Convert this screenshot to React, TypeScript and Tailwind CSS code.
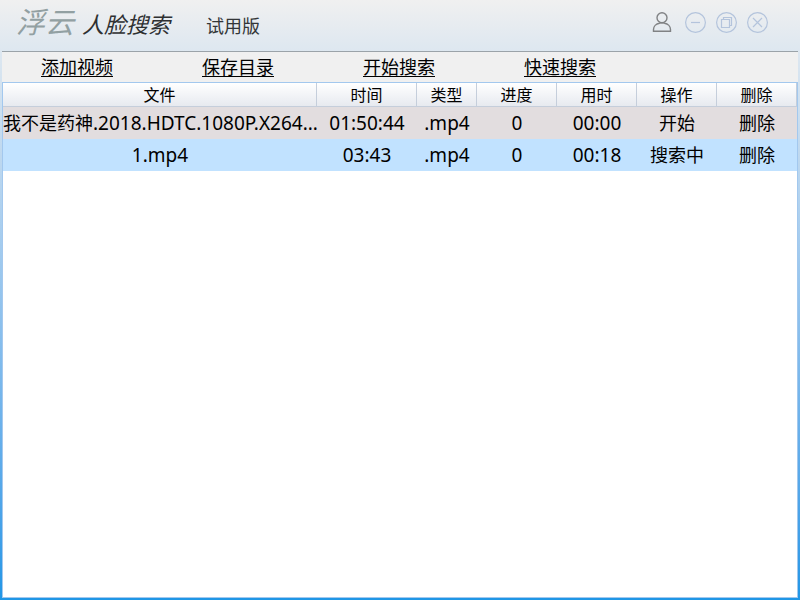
import type { ReactNode } from "react";

type Video = {
  title: string;
  file: string;
  duration: string;
  type: string;
  progress: number;
  elapsed: string;
  action: string;
  rowClass: string;
};

const menu = ["添加视频", "保存目录", "开始搜索", "快速搜索"];

const columns = [
  { title: "文件", width: "" },
  { title: "时间", width: "w-[100px]" },
  { title: "类型", width: "w-[60px]" },
  { title: "进度", width: "w-[80px]" },
  { title: "用时", width: "w-[80px]" },
  { title: "操作", width: "w-[80px]" },
  { title: "删除", width: "w-[80px]" },
];

const videos: Video[] = [
  {
    title: "我不是药神",
    file: ".2018.HDTC.1080P.X264...",
    duration: "01:50:44",
    type: ".mp4",
    progress: 0,
    elapsed: "00:00",
    action: "开始",
    rowClass: "bg-[#e2dddf]",
  },
  {
    title: "",
    file: "1.mp4",
    duration: "03:43",
    type: ".mp4",
    progress: 0,
    elapsed: "00:18",
    action: "搜索中",
    rowClass: "bg-[#c1e2ff]",
  },
];

function WindowButton({ label, children }: { label: string; children: ReactNode }) {
  return (
    <button type="button" aria-label={label} className="text-[#b4c4dc] hover:text-[#7d95b8]">
      <svg width="22" height="22" viewBox="0 0 22 22" fill="none" stroke="currentColor" strokeWidth="1.2">
        <circle cx="10.5" cy="10.5" r="9.9" />
        {children}
      </svg>
    </button>
  );
}

export default function App() {
  return (
    <div className="flex min-h-screen flex-col bg-linear-to-b from-[#f0f0f0] from-0% via-[#dde7f0] via-[52px] to-[#1e96e6] px-[2px] pb-[2px] font-['Noto_Sans','Noto_Sans_CJK_SC',sans-serif] text-black">
      {/* ================= TITLE BAR ================= */}
      <header className="flex h-[52px] items-start justify-between border-b border-[#9ba3a9] pr-[29px] pl-[14px]">
        <h1 className="flex items-baseline pt-[3px] leading-[38px]">
          <span className="text-[29px] font-normal text-[#92a0a2] italic">浮云</span>
          <span className="ml-2 text-[22px] font-normal text-[#2e3032] italic">人脸搜索</span>
          <span className="ml-9 text-[18px] font-normal text-[#333638]">试用版</span>
        </h1>

        <div className="flex items-center gap-[9px] pt-3">
          <button type="button" aria-label="用户" className="mr-1 text-[#808284]">
            <svg width="20" height="22" viewBox="0 0 20 22" fill="none" stroke="currentColor" strokeWidth="1.4">
              <circle cx="10" cy="5.8" r="5" />
              <path d="M1.5 19.3V17.5C1.5 14.5 4 11.8 7.5 11.2Q10 10.2 12.5 11.2C16 11.8 18.5 14.5 18.5 17.5V19.3Z" />
            </svg>
          </button>
          <WindowButton label="最小化">
            <path d="M6 10.5H15" />
          </WindowButton>
          <WindowButton label="还原">
            <path d="M5.5 7.5H13.5V15.5H5.5ZM7.5 7.5V5.5H15.5V13.5H13.5" />
          </WindowButton>
          <WindowButton label="关闭">
            <path d="M6 6L15 15M15 6L6 15" />
          </WindowButton>
        </div>
      </header>

      {/* ================= MENU ================= */}
      <nav className="flex h-[30px] items-center gap-[89px] bg-[#f0f0f0] pl-[39px]">
        {menu.map((item) => (
          <a key={item} href="#" className="text-[18px] leading-[30px] underline underline-offset-2">
            {item}
          </a>
        ))}
      </nav>

      {/* ================= VIDEO LIST ================= */}
      <main className="flex-1 border border-[#a3c8ee] bg-white">
        <table className="w-full table-fixed border-separate border-spacing-0 text-center">
          <thead>
            <tr className="h-6 bg-linear-to-b from-white to-[#e6e9ef]">
              {columns.map((col) => (
                <th
                  key={col.title}
                  className={`${col.width} border-r border-b border-[#c5cedb] p-0 pt-px text-[16px] leading-[22px] font-normal`}
                >
                  {col.title}
                </th>
              ))}
            </tr>
          </thead>
          <tbody className="text-[19px] leading-8">
            {videos.map((video) => (
              <tr key={video.file} className={`h-8 ${video.rowClass}`}>
                <td className="overflow-hidden p-0 whitespace-nowrap">
                  <span className="text-[18px]">{video.title}</span>
                  {video.file}
                </td>
                <td className="p-0">{video.duration}</td>
                <td className="p-0">{video.type}</td>
                <td className="p-0">{video.progress}</td>
                <td className="p-0">{video.elapsed}</td>
                <td className="p-0 text-[18px]">
                  <button type="button">{video.action}</button>
                </td>
                <td className="p-0 text-[18px]">
                  <button type="button">删除</button>
                </td>
              </tr>
            ))}
          </tbody>
        </table>
      </main>
    </div>
  );
}
